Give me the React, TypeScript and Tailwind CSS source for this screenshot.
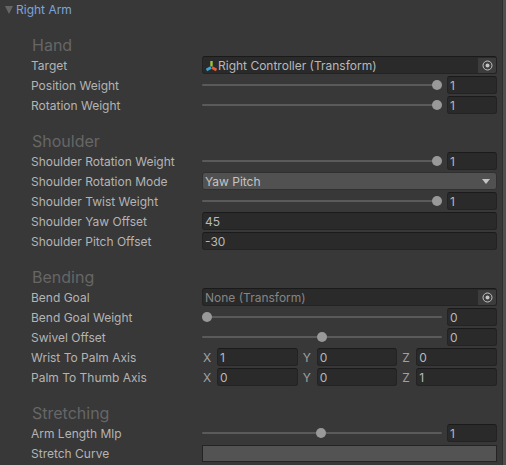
import { ReactNode } from "react";

function Label({ children }: { children: ReactNode }) {
  return <div className="w-[171px] shrink-0 truncate pt-px text-[12px] text-[#b4b4b4]">{children}</div>;
}

function Row({ label, children }: { label: string; children: ReactNode }) {
  return (
    <div className="flex h-[20px] items-center">
      <Label>{label}</Label>
      <div className="flex min-w-0 flex-1 items-center">{children}</div>
    </div>
  );
}

function Heading({ children }: { children: ReactNode }) {
  return (
    <div className="mt-[16px] flex h-[20px] items-center text-[16px] text-[#666666]">
      <span className="pl-px">{children}</span>
    </div>
  );
}

function Field({ children, className = "" }: { children: ReactNode; className?: string }) {
  return (
    <div
      className={`flex h-[18px] items-center rounded-[3px] border border-[#232323] border-t-[#1a1a1a] bg-[#2a2a2a] px-[2px] pt-px text-[12px] text-[#b8b8b8] ${className}`}
    >
      {children}
    </div>
  );
}

function Slider({ value, pos }: { value: string; pos: number }) {
  return (
    <>
      <div className="relative h-[18px] w-[240px] shrink-0">
        <div className="absolute inset-x-0 top-[8px] h-[2px] rounded-full bg-[#5a5a5a]" />
        <div
          className="absolute top-[4px] h-[10px] w-[10px] rounded-full bg-[#999999]"
          style={{ left: pos }}
        />
      </div>
      <Field className="ml-[5px] flex-1">{value}</Field>
    </>
  );
}

function Picker({ children }: { children: ReactNode }) {
  return (
    <Field className="w-full overflow-hidden pr-0 pt-0">
      <div className="min-w-0 flex-1 truncate pt-px">{children}</div>
      <div className="flex h-[16px] w-[18px] shrink-0 items-center justify-center bg-[#3c3c3c]">
        <svg width="11" height="11" viewBox="0 0 11 11" fill="none">
          <circle cx="5.5" cy="5.5" r="4.5" stroke="#c4c4c4" strokeWidth="1" />
          <circle cx="5.5" cy="5.5" r="2" fill="#c4c4c4" />
        </svg>
      </div>
    </Field>
  );
}

function Axis({ name, value }: { name: string; value: string }) {
  return (
    <div className="flex flex-1 items-center">
      <span className="w-[15px] shrink-0 pl-px pt-px text-[12px] text-[#a0a0a0]">{name}</span>
      <Field className="min-w-0 flex-1">{value}</Field>
    </div>
  );
}

function Vector({ x, y, z }: { x: string; y: string; z: string }) {
  return (
    <div className="flex w-full gap-[4px]">
      <Axis name="X" value={x} />
      <Axis name="Y" value={y} />
      <Axis name="Z" value={z} />
    </div>
  );
}

function TransformIcon() {
  return (
    <svg width="13" height="12" viewBox="0 0 13 12" className="shrink-0">
      <path d="M6.5 1V6.5" stroke="#9ac63e" strokeWidth="2.4" />
      <path d="M6 7.5L1.5 10" stroke="#35a6dc" strokeWidth="2.6" />
      <path d="M7 7.5L11.5 10" stroke="#e85c30" strokeWidth="2.6" />
    </svg>
  );
}

export default function App() {
  return (
    <div
      className="relative h-[465px] w-[506px] overflow-hidden bg-[#383838]"
      style={{ fontFamily: "Inter, 'Liberation Sans', sans-serif" }}
    >
      <div className="flex h-[19px] items-center pl-[5px] text-[12px] text-[#7ba4dc]">
        <svg width="8" height="8" viewBox="0 0 8 8" className="mr-[3px]">
          <path d="M0 0H8L4 8Z" fill="#656565" />
        </svg>
        Right Arm
      </div>

      <div className="pl-[31px] pr-[9px]">
        <Heading>Hand</Heading>
        <Row label="Target">
          <Picker>
            <span className="flex items-center">
              <TransformIcon />
              Right Controller (Transform)
            </span>
          </Picker>
        </Row>
        <Row label="Position Weight">
          <Slider value="1" pos={230} />
        </Row>
        <Row label="Rotation Weight">
          <Slider value="1" pos={230} />
        </Row>

        <Heading>Shoulder</Heading>
        <Row label="Shoulder Rotation Weight">
          <Slider value="1" pos={230} />
        </Row>
        <Row label="Shoulder Rotation Mode">
          <div className="flex h-[18px] w-full items-center justify-between rounded-[3px] border border-[#303030] bg-[#515151] pl-[2px] pr-[6px] pt-px text-[12px] text-[#c4c4c4]">
            Yaw Pitch
            <svg width="8" height="5" viewBox="0 0 8 5">
              <path d="M0 0H8L4 5Z" fill="#c4c4c4" />
            </svg>
          </div>
        </Row>
        <Row label="Shoulder Twist Weight">
          <Slider value="1" pos={230} />
        </Row>
        <Row label="Shoulder Yaw Offset">
          <Field className="w-full">45</Field>
        </Row>
        <Row label="Shoulder Pitch Offset">
          <Field className="w-full">-30</Field>
        </Row>

        <Heading>Bending</Heading>
        <Row label="Bend Goal">
          <Picker>
            <span className="text-[#858585]">None (Transform)</span>
          </Picker>
        </Row>
        <Row label="Bend Goal Weight">
          <Slider value="0" pos={0} />
        </Row>
        <Row label="Swivel Offset">
          <Slider value="0" pos={115} />
        </Row>
        <Row label="Wrist To Palm Axis">
          <Vector x="1" y="0" z="0" />
        </Row>
        <Row label="Palm To Thumb Axis">
          <Vector x="0" y="0" z="1" />
        </Row>

        <Heading>Stretching</Heading>
        <Row label="Arm Length Mlp">
          <Slider value="1" pos={114} />
        </Row>
        <Row label="Stretch Curve">
          <div className="h-[17px] w-full border border-[#242424] bg-[#535353]" />
        </Row>
      </div>

      {/* scrollbar strip on the right edge */}
      <div className="absolute inset-y-0 right-0 w-[4px] border-l border-[#2e2e2e] bg-[#4f4f4f]" />
    </div>
  );
}
